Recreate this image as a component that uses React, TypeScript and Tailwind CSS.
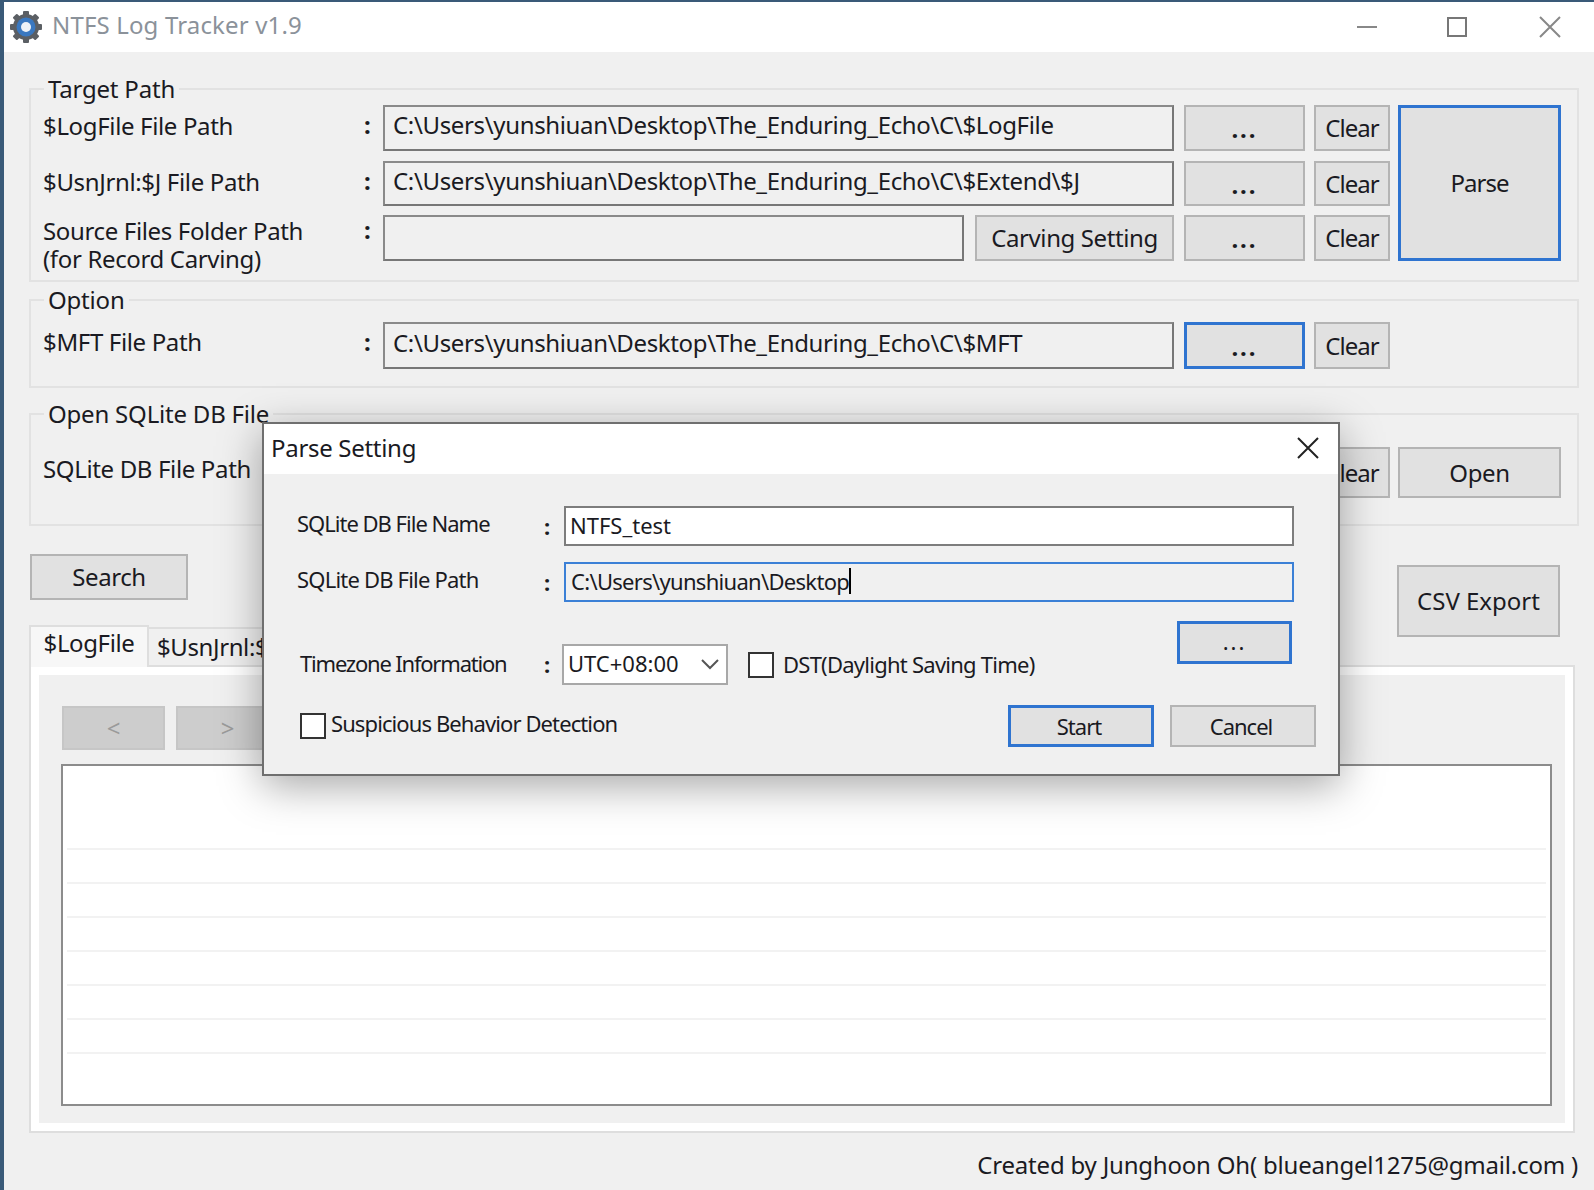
import React from 'react';

const font = "font-['Noto_Sans',sans-serif]";

const Btn = ({ children, className = '', focus = false }: { children?: React.ReactNode; className?: string; focus?: boolean }) => (
  <div
    className={`flex items-center justify-center shrink-0 bg-[#e1e1e1] text-[#1a1a22] ${
      focus ? 'border-[3px] border-[#2f74d0]' : 'border-2 border-[#b4b4b4]'
    } ${className}`}
  >
    {children}
  </div>
);

const PathInput = ({ value, className = 'w-[791px]' }: { value?: string; className?: string }) => (
  <div className={`flex items-center h-full shrink-0 pl-[8px] pb-[6px] tracking-[-0.35px] border-2 border-[#8a8a8a] border-r-[#777] border-b-[#777] whitespace-nowrap overflow-hidden ${className}`}>
    {value}
  </div>
);

const Label = ({ children, textClass = 'pb-[4px]', colonClass = 'pb-[6px]' }: { children: React.ReactNode; textClass?: string; colonClass?: string }) => (
  <>
    <div className={`w-[321px] shrink-0 leading-[28px] tracking-[-0.35px] whitespace-nowrap ${textClass}`}>{children}</div>
    <div className={`w-[19px] shrink-0 font-bold ${colonClass}`}>:</div>
  </>
);

const Dots = () => <span className="font-bold tracking-[2px] pt-[2px]">...</span>;

const ClearBtn = () => <Btn className="w-[76px] h-full ml-[9px] tracking-[-1px]">Clear</Btn>;

const Row = ({ label, value, focus = false, h = 'h-[46px]', textClass, colonClass }: { label: React.ReactNode; value: string; focus?: boolean; h?: string; textClass?: string; colonClass?: string }) => (
  <div className={`flex items-center ${h}`}>
    <Label textClass={textClass} colonClass={colonClass}>{label}</Label>
    <PathInput value={value} />
    <Btn focus={focus} className="w-[121px] h-full ml-[10px]"><Dots /></Btn>
    <ClearBtn />
  </div>
);

const Legend = ({ children }: { children: React.ReactNode }) => (
  <legend className="ml-[1px] px-[4px] h-[28px] leading-[28px] tracking-[-0.2px] text-[#1a1a22]">{children}</legend>
);

const Gear = () => (
  <svg width="34" height="34" viewBox="0 0 34 34" className="shrink-0 -ml-[1px]">
    <g fill="#5b5f64">
      <circle cx="17" cy="17" r="13" />
      {[0, 45, 90, 135, 180, 225, 270, 315].map((a) => (
        <rect key={a} x="14" y="1" width="6" height="6" rx="1" transform={`rotate(${a} 17 17)`} />
      ))}
    </g>
    <circle cx="17" cy="17" r="9.5" fill="#3a78c0" />
    <circle cx="17" cy="17" r="5" fill="#eef2f7" />
  </svg>
);

const Check = () => <div className="w-[26px] h-[26px] shrink-0 bg-white border-2 border-[#333]" />;

const Colon = () => <div className="w-[17px] font-bold text-center">:</div>;

const ParseDialog = () => (
  <div className="absolute left-[258px] top-[420px] w-[1078px] h-[354px] flex flex-col bg-[#f0f0f0] border-2 border-[#6f6f6f] text-[22px] tracking-[-1px] text-[#1a1a22] shadow-[0_10px_40px_rgba(0,0,0,0.35)]">
    <div className="flex items-center justify-between h-[50px] shrink-0 bg-white pl-[7px] pr-[19px] text-[24px] tracking-[-0.3px] pb-[2px]">
      <span>Parse Setting</span>
      <svg width="22" height="22" viewBox="0 0 22 22" fill="none" stroke="#222" strokeWidth="2">
        <path d="M1 1L21 21M21 1L1 21" />
      </svg>
    </div>
    <div className="flex items-center h-[40px] mt-[32px] pl-[33px]">
      <div className="w-[241px] pb-[6px]">SQLite DB File Name</div>
      <Colon />
      <div className="w-[730px] h-full ml-[9px] pl-[4px] pb-[2px] flex items-center bg-white border-2 border-[#7d7d7d] tracking-[0px]">NTFS_test</div>
    </div>
    <div className="flex items-center h-[40px] mt-[16px] pl-[33px]">
      <div className="w-[241px] pb-[6px] tracking-[-0.8px]">SQLite DB File Path</div>
      <Colon />
      <div className="w-[730px] h-full ml-[9px] pl-[5px] pb-[2px] flex items-center bg-[#f0f0f0] border-2 border-[#3b80d6] tracking-[-0.7px]">
        C:\Users\yunshiuan\Desktop<span className="w-[2px] h-[26px] bg-black" />
      </div>
    </div>
    <div className="relative flex items-center h-[41px] mt-[42px] pl-[36px]">
      <div className="w-[238px] pb-[2px] tracking-[-1.2px]">Timezone Information</div>
      <Colon />
      <div className="flex items-center justify-between w-[166px] h-full ml-[7px] pl-[4px] pr-[6px] pb-[2px] bg-white border-2 border-[#a8a8a8] tracking-[0px]">
        <span>UTC+08:00</span>
        <svg width="20" height="12" viewBox="0 0 20 12" fill="none" stroke="#555" strokeWidth="2">
          <path d="M2 2L10 10L18 2" />
        </svg>
      </div>
      <div className="ml-[20px]"><Check /></div>
      <div className="ml-[9px] tracking-[-0.75px]">DST(Daylight Saving Time)</div>
      <Btn focus className="absolute left-[913px] top-[-23px] w-[115px] h-[43px]">
        <span className="tracking-[2px] pb-[2px]">...</span>
      </Btn>
    </div>
    <div className="flex items-center h-[42px] mt-[20px] pl-[36px]">
      <Check />
      <div className="ml-[5px] pb-[6px] tracking-[-0.9px]">Suspicious Behavior Detection</div>
      <Btn focus className="w-[146px] h-full ml-auto pr-[4px]">Start</Btn>
      <Btn className="w-[146px] h-full ml-[16px] mr-[22px] pr-[4px]">Cancel</Btn>
    </div>
  </div>
);

export default function App() {
  return (
    <div className={`relative w-[1594px] h-[1190px] overflow-hidden bg-[#f0f0f0] border-l-4 border-t-2 border-l-[#3a5a78] border-t-[#3a5a78] text-[24px] text-[#1a1a22] tracking-[-0.4px] ${font}`}>
      {/* Title bar */}
      <div className="flex items-center h-[50px] bg-white pl-[6px] tracking-[0.15px]">
        <Gear />
        <span className="ml-[9px] pb-[4px] text-[#8b929a]">NTFS Log Tracker v1.9</span>
        <div className="flex items-center ml-auto text-[#777] pb-[1px]">
          <svg width="20" height="4" viewBox="0 0 20 4" className="mr-[70px]"><rect y="1" width="20" height="2" fill="#888" /></svg>
          <svg width="20" height="20" viewBox="0 0 20 20" fill="none" stroke="#777" strokeWidth="2" className="mr-[72px]"><rect x="1" y="1" width="18" height="18" /></svg>
          <svg width="22" height="22" viewBox="0 0 22 22" fill="none" stroke="#888" strokeWidth="2" className="mr-[33px]"><path d="M1 1L21 21M21 1L1 21" /></svg>
        </div>
      </div>

      <div className="w-[1550px] ml-[25px] mt-[23px]">
        {/* Target Path */}
        <fieldset className="h-[207px] border-2 border-[#e2e2e2] pl-[12px]">
          <Legend>Target Path</Legend>
          <div className="flex mt-[2px]">
            <div className="flex flex-col">
              <Row label="$LogFile File Path" value="C:\Users\yunshiuan\Desktop\The_Enduring_Echo\C\$LogFile" />
              <div className="mt-[10px]">
                <Row h="h-[45px]" label="$UsnJrnl:$J File Path" value="C:\Users\yunshiuan\Desktop\The_Enduring_Echo\C\$Extend\$J" />
              </div>
              <div className="flex items-center h-[46px] mt-[9px]">
                <Label textClass="pt-[14px]" colonClass="pb-[16px]">
                  Source Files Folder Path
                  <br />
                  (for Record Carving)
                </Label>
                <PathInput className="w-[581px]" />
                <Btn className="w-[199px] h-full ml-[11px]">Carving Setting</Btn>
                <Btn className="w-[121px] h-full ml-[10px]"><Dots /></Btn>
                <ClearBtn />
              </div>
            </div>
            <Btn focus className="w-[163px] h-[156px] ml-[8px] tracking-[-1px]">Parse</Btn>
          </div>
        </fieldset>

        {/* Option */}
        <fieldset className="h-[102px] mt-[4px] border-2 border-[#e2e2e2] pl-[12px]">
          <Legend>Option</Legend>
          <div className="mt-[8px]">
            <Row focus h="h-[47px]" textClass="pb-[8px]" colonClass="pb-[8px]" label="$MFT File Path" value="C:\Users\yunshiuan\Desktop\The_Enduring_Echo\C\$MFT" />
          </div>
        </fieldset>

        {/* Open SQLite DB File */}
        <fieldset className="h-[126px] mt-[12px] border-2 border-[#e2e2e2] pl-[12px]">
          <Legend>Open SQLite DB File</Legend>
          <div className="flex items-center h-[51px] mt-[19px]">
            <Label textClass="pb-[8px]">SQLite DB File Path</Label>
            <PathInput />
            <Btn className="w-[121px] h-full ml-[10px]"><Dots /></Btn>
            <ClearBtn />
            <Btn className="w-[163px] h-full ml-[8px]">Open</Btn>
          </div>
        </fieldset>

        {/* Search and export */}
        <div className="flex items-start justify-between h-[69px] mt-[28px] ml-[1px] pr-[19px]">
          <Btn className="w-[158px] h-[46px]">Search</Btn>
          <Btn className="w-[163px] h-[72px] mt-[11px] tracking-[0px]">CSV Export</Btn>
        </div>

        {/* Tabs */}
        <div className="flex items-end h-[42px]">
          <div className="flex items-center justify-center w-[120px] h-full bg-[#f7f7f7] border-2 border-b-0 border-[#dedede] -mb-[2px] z-10 pb-[8px]">$LogFile</div>
          <div className="flex items-center pl-[8px] w-[140px] h-[38px] bg-[#f0f0f0] border-2 border-l-0 border-b-0 border-[#dedede] whitespace-nowrap overflow-hidden">$UsnJrnl:$J</div>
        </div>
        <div className="w-[1546px] h-[468px] border-2 border-[#dedede] bg-white p-[8px]">
          <div className="h-full bg-[#f0f0f0] pt-[31px] pl-[22px]">
            <div className="flex gap-[11px] pl-[1px] text-[#9a9a9a]">
              <div className="flex items-center justify-center w-[103px] h-[44px] bg-[#cdcdcd] border-2 border-[#c6c6c6]">&lt;</div>
              <div className="flex items-center justify-center w-[103px] h-[44px] bg-[#cdcdcd] border-2 border-[#c6c6c6]">&gt;</div>
            </div>
            <div className="w-[1491px] h-[342px] mt-[14px] bg-white border-2 border-[#8c8c8c]">
              <div className="h-[82px]" />
              {[0, 1, 2, 3, 4, 5, 6].map((i) => (
                <div key={i} className="h-[34px] border-t-2 border-[#f2f2f2] mx-[4px]" />
              ))}
            </div>
          </div>
        </div>

        <div className="mt-[14px] pr-[1px] text-right whitespace-nowrap tracking-[-0.2px]">Created by Junghoon Oh( blueangel1275@gmail.com )</div>
      </div>

      <ParseDialog />
    </div>
  );
}
